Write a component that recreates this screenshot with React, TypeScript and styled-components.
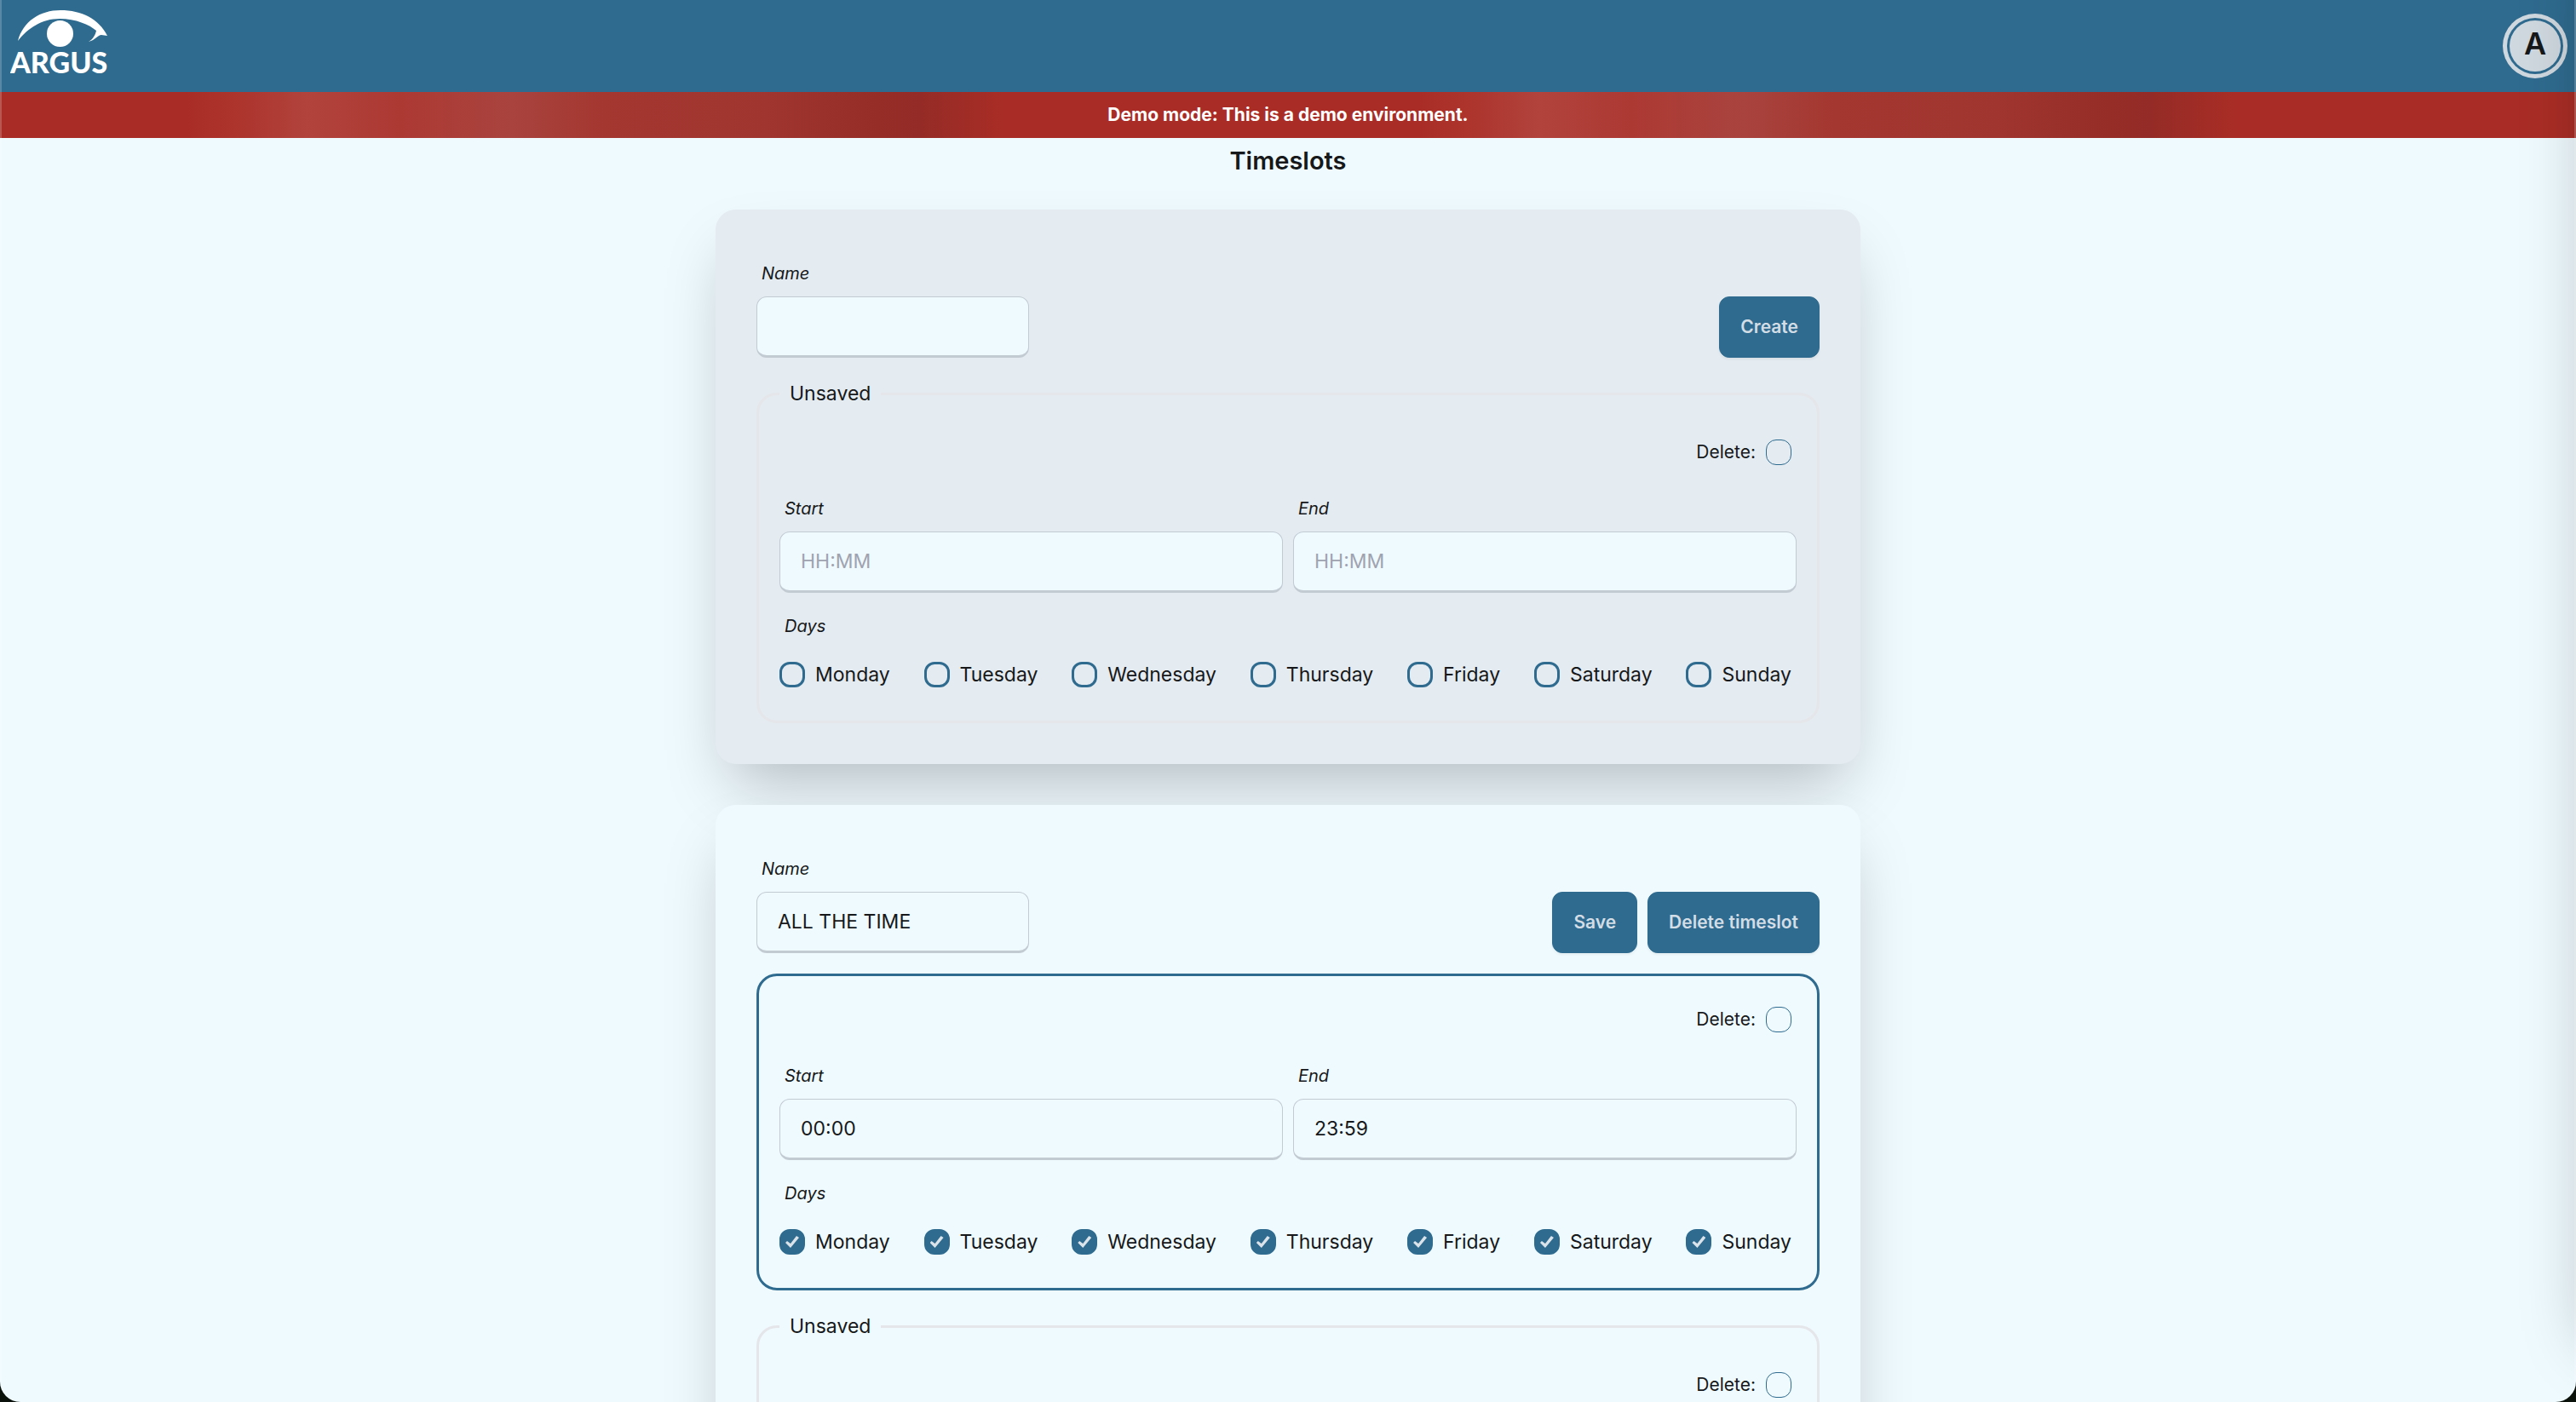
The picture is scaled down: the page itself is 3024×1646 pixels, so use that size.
import React, { useId, useState } from "react";
import styled, { createGlobalStyle } from "styled-components";

const color = {
  primary: "#2f6b8f",
  page: "#effaff",
  panel: "#e4ebf1",
  text: "#161819",
  onPrimary: "#d3dde6",
  inputLine: "#c2cad2",
  faintLine: "#e5e6e9",
  placeholder: "#9fa3b0",
};

const GlobalStyle = createGlobalStyle`
  *, *::before, *::after { box-sizing: border-box; }
  body {
    margin: 0;
    background: ${color.page};
    color: ${color.text};
    font-family: Inter, "Liberation Sans", sans-serif;
    font-size: 23px;
    line-height: 36px;
    overflow-x: hidden;
    scrollbar-width: none;
  }
  input, button { font: inherit; color: inherit; }
`;

const Header = styled.header`
  display: flex;
  align-items: center;
  justify-content: space-between;
  height: 108px;
  padding: 0 18px 0 12px;
  background: ${color.primary};
`;

const LogoLink = styled.a`
  display: block;
  height: 108px;
  color: #fff;
`;

const Avatar = styled.button`
  width: 60px;
  height: 60px;
  padding: 0 0 6px;
  border: 0;
  border-radius: 50%;
  background: #d0d8df;
  box-shadow: 0 0 0 3px ${color.primary}, 0 0 0 8px #d0d8df;
  font-size: 36px;
  font-weight: 600;
`;

const Banner = styled.div`
  padding: 12px;
  background: repeating-linear-gradient(
    90deg,
    #a92d26 0,
    #a92d26 220px,
    #ad362f 290px,
    #b1433c 360px,
    #ad3933 470px,
    #a9433e 600px,
    #a43730 710px,
    #a0352f 900px,
    #962d27 1030px,
    #952b26 1080px,
    #a92d26 1180px,
    #a92d26 1446px
  );
  color: #fff;
  font-size: 21px;
  font-weight: 700;
  line-height: 30px;
  text-align: center;
`;

const Main = styled.main`
  display: flex;
  flex-direction: column;
  align-items: center;
  padding: 6px 24px 48px;
`;

const Title = styled.h1`
  margin: 0 0 36px;
  font-size: 29px;
  font-weight: 600;
  line-height: 42px;
`;

const Cards = styled.div`
  display: flex;
  flex-direction: column;
  gap: 48px;
  width: 100%;
  max-width: 1344px;
`;

const Card = styled.form<{ $muted?: boolean }>`
  display: flex;
  flex-direction: column;
  gap: 24px;
  padding: 48px;
  border-radius: 24px;
  background: ${(p) => (p.$muted ? color.panel : color.page)};
  box-shadow: 0 38px 75px -18px rgba(0, 0, 0, 0.25);
`;

const CardTop = styled.div`
  display: flex;
  align-items: flex-end;
  justify-content: space-between;
`;

const Field = styled.div<{ $width?: string }>`
  display: flex;
  flex-direction: column;
  flex: ${(p) => (p.$width ? "none" : "1 1 0")};
  width: ${(p) => p.$width ?? "auto"};
`;

const FieldLabel = styled.label`
  padding: 12px 6px;
  font-size: 20px;
  font-style: italic;
  line-height: 30px;
`;

const GroupLabel = styled(FieldLabel).attrs({ as: "div" })``;

const TextInput = styled.input`
  width: 100%;
  height: 72px;
  padding: 0 24px;
  border: 1px solid ${color.inputLine};
  border-bottom-width: 3px;
  border-radius: 12px;
  background: ${color.page};
  outline: none;
  &::placeholder { color: ${color.placeholder}; opacity: 1; }
`;

const Actions = styled.div`
  display: flex;
  gap: 12px;
`;

const Button = styled.button`
  height: 72px;
  padding: 0 24px;
  border: 1px solid ${color.primary};
  border-radius: 12px;
  background: ${color.primary};
  box-shadow: 0 2px 3px rgba(0, 0, 0, 0.05);
  color: ${color.onPrimary};
  font-size: 21px;
  font-weight: 600;
`;

const Recurrence = styled.fieldset<{ $saved?: boolean }>`
  display: flex;
  flex-direction: column;
  gap: 12px;
  min-width: 0;
  margin: 0;
  padding: 24px;
  border: 3px solid ${(p) => (p.$saved ? color.primary : color.faintLine)};
  border-radius: 24px;
`;

const Legend = styled.legend`
  padding: 0 12px;
`;

const DeleteRow = styled.div`
  display: flex;
  justify-content: flex-end;
`;

const DeleteLabel = styled.label`
  display: flex;
  align-items: center;
  gap: 12px;
  padding: 12px 6px;
  font-size: 21px;
  line-height: 30px;
`;

const Times = styled.div`
  display: flex;
  gap: 12px;
`;

const DayRow = styled.div`
  display: flex;
  justify-content: space-between;
`;

const DayLabel = styled.label`
  display: flex;
  align-items: center;
  gap: 12px;
  padding: 12px 6px 12px 0;
`;

const Checkbox = styled.input.attrs({ type: "checkbox" })<{ $thin?: boolean }>`
  appearance: none;
  display: grid;
  place-content: center;
  flex: none;
  width: 30px;
  height: 30px;
  margin: 0;
  border: ${(p) => (p.$thin ? "1px" : "3px")} solid ${color.primary};
  border-radius: 12px;
  &:checked { background: ${color.primary}; }
  &:checked::after {
    content: "";
    width: 16px;
    height: 14px;
    background: #dae3ea;
    clip-path: polygon(0 8px, 2px 6px, 6px 9px, 13px 0, 16px 2px, 6px 14px);
  }
`;

const Drawer = styled.aside`
  position: fixed;
  top: -120px;
  bottom: 90px;
  left: 100%;
  width: 480px;
  box-shadow: 0 38px 75px -18px rgba(0, 0, 0, 0.28);
`;

const WindowEdge = styled.div`
  position: fixed;
  inset: 0;
  border: solid rgba(255, 255, 255, 0.2);
  border-width: 0 2px;
  border-radius: 0 0 24px 24px;
  box-shadow: 0 0 0 40px #0b120c;
  pointer-events: none;
`;

function Logo() {
  return (
    <svg width="130" height="108" viewBox="12 0 130 108" fill="currentColor" role="img" aria-label="Argus">
      <path d="M21 48C27 25 47 12 71 12c25 0 45 10 55 30l-7-1c-4 0-7 6-15 8 5-3 8-8 9-13-8-7-24-14-43-14-21 0-37 11-49 26z" />
      <circle cx="70.500" cy="39.500" r="15.500" />
      <text x="12" y="86" fontFamily="Lato, sans-serif" fontWeight="900" fontSize="34">ARGUS</text>
    </svg>
  );
}

const DAYS = ["Monday", "Tuesday", "Wednesday", "Thursday", "Friday", "Saturday", "Sunday"];

type Period = { start: string; end: string; allDays: boolean; saved: boolean };

const EMPTY: Period = { start: "", end: "", allDays: false, saved: false };

function InputField({ label, value, placeholder, width }: { label: string; value: string; placeholder?: string; width?: string }) {
  const id = useId();
  const [text, setText] = useState(value);
  return (
    <Field $width={width}>
      <FieldLabel htmlFor={id}>{label}</FieldLabel>
      <TextInput id={id} type="text" value={text} placeholder={placeholder} onChange={(e) => setText(e.target.value)} />
    </Field>
  );
}

function RecurrenceForm({ period }: { period: Period }) {
  const groupId = useId();
  return (
    <Recurrence $saved={period.saved}>
      {!period.saved && <Legend>Unsaved</Legend>}
      <DeleteRow>
        <DeleteLabel>
          Delete:
          <Checkbox $thin />
        </DeleteLabel>
      </DeleteRow>
      <Times>
        <InputField label="Start" value={period.start} placeholder="HH:MM" />
        <InputField label="End" value={period.end} placeholder="HH:MM" />
      </Times>
      <div role="group" aria-labelledby={groupId}>
        <GroupLabel id={groupId}>Days</GroupLabel>
        <DayRow>
          {DAYS.map((day) => (
            <DayLabel key={day}>
              <Checkbox defaultChecked={period.allDays} />
              {day}
            </DayLabel>
          ))}
        </DayRow>
      </div>
    </Recurrence>
  );
}

function TimeslotCard({ name, actions, periods, muted }: { name: string; actions: string[]; periods: Period[]; muted?: boolean }) {
  return (
    <Card $muted={muted} onSubmit={(e) => e.preventDefault()}>
      <CardTop>
        <InputField label="Name" value={name} width="320px" />
        <Actions>
          {actions.map((action, i) => (
            <Button key={action} type={i === 0 ? "submit" : "button"}>{action}</Button>
          ))}
        </Actions>
      </CardTop>
      {periods.map((period, i) => (
        <RecurrenceForm key={i} period={period} />
      ))}
    </Card>
  );
}

export default function App() {
  return (
    <>
      <GlobalStyle />
      <Header>
        <LogoLink href="#home"><Logo /></LogoLink>
        <Avatar type="button">A</Avatar>
      </Header>
      <Banner>Demo mode: This is a demo environment.</Banner>
      <Main>
        <Title>Timeslots</Title>
        <Cards>
          <TimeslotCard muted name="" actions={["Create"]} periods={[EMPTY]} />
          <TimeslotCard
            name="ALL THE TIME"
            actions={["Save", "Delete timeslot"]}
            periods={[{ start: "00:00", end: "23:59", allDays: true, saved: true }, EMPTY]}
          />
        </Cards>
      </Main>
      <Drawer aria-hidden="true" />
      <WindowEdge />
    </>
  );
}
